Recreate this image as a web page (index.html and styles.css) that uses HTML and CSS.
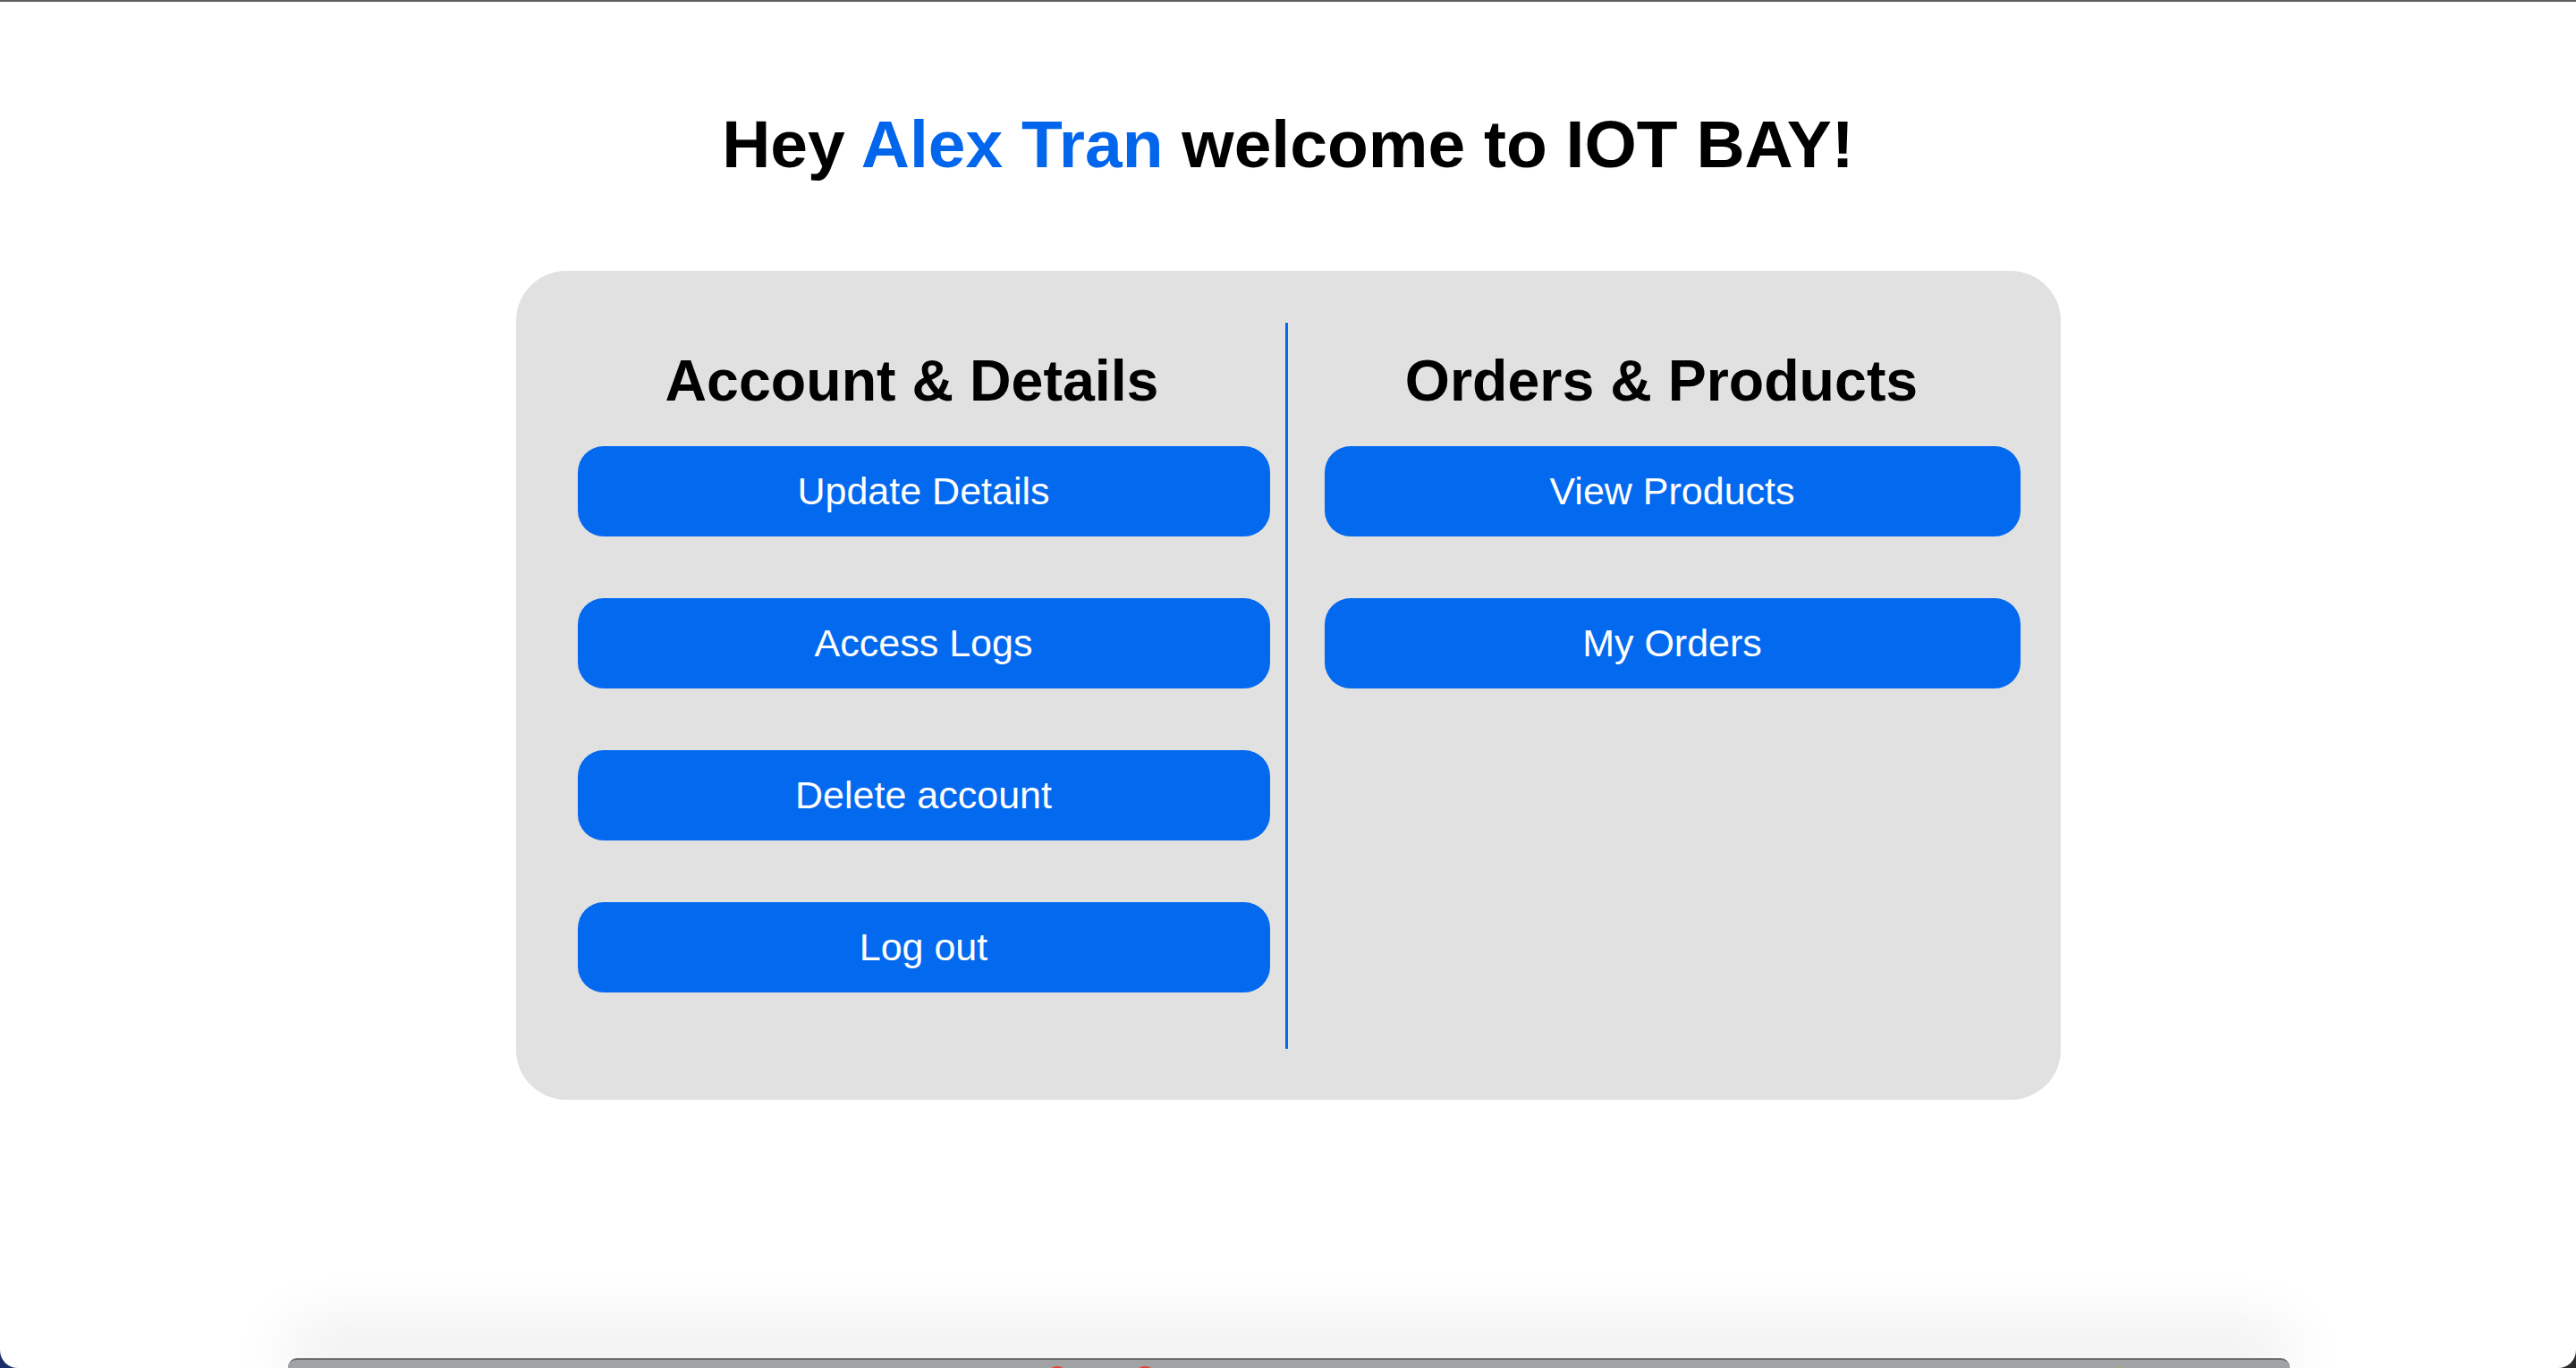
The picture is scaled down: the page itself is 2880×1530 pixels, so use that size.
FILE: index.html
```html
<!DOCTYPE html>
<html lang="en">
<head>
<meta charset="utf-8">
<title>IOT BAY - Dashboard</title>
<link rel="stylesheet" href="styles.css">
</head>
<body>
<div class="window">
  <h1 class="title">Hey <span class="name">Alex Tran</span> welcome to IOT BAY!</h1>
  <section class="panel">
    <div class="col col-left">
      <h2 class="col-title">Account &amp; Details</h2>
      <a class="btn" href="#">Update Details</a>
      <a class="btn" href="#">Access Logs</a>
      <a class="btn" href="#">Delete account</a>
      <a class="btn" href="#">Log out</a>
    </div>
    <div class="col col-right">
      <h2 class="col-title">Orders &amp; Products</h2>
      <a class="btn" href="#">View Products</a>
      <a class="btn" href="#">My Orders</a>
    </div>
  </section>
</div>
<div class="dock">
  <span class="dock-icon red one"></span>
  <span class="dock-icon red two"></span>
  <span class="dock-icon orange"></span>
  <span class="dock-icon green"></span>
</div>
</body>
</html>
```
FILE: styles.css
```css
html {
  background: linear-gradient(to right, #1a2e6c 0%, #1f2f5e 40%, #2b2b2d 100%);
}
body {
  margin: 0;
  height: 1530px;
  overflow: hidden;
  font-family: "Liberation Sans", Arial, sans-serif;
}
.window {
  height: 1530px;
  box-sizing: border-box;
  background: #ffffff;
  border-top: 2px solid #5e5d62;
  border-radius: 0 0 20px 20px;
  padding-top: 122px;
}
.title {
  margin: 0 0 104px;
  font-size: 75px;
  line-height: 1;
  font-weight: 700;
  text-align: center;
  color: #000;
}
.name {
  color: #0266ed;
}
.panel {
  width: 1727px;
  height: 927px;
  box-sizing: border-box;
  margin: 0 auto;
  padding: 58px 0 57px;
  background: #e1e1e1;
  border-radius: 56px;
  display: flex;
}
.col {
  display: flex;
  flex-direction: column;
  gap: 69px;
}
.col-left {
  width: 860px;
  box-sizing: border-box;
  padding: 0 17px 0 69px;
}
.col-right {
  flex: 1;
  border-left: 3px solid #0369ee;
  padding: 0 45px 0 41px;
}
.col-title {
  margin: 33px 0 -29px;
  font-size: 64.5px;
  line-height: 1;
  font-weight: 700;
  text-align: center;
  color: #000;
}
.col-left .col-title {
  padding-right: 26px;
}
.col-right .col-title {
  padding-right: 24px;
}
.btn {
  height: 101px;
  display: flex;
  align-items: center;
  justify-content: center;
  background: #0369ee;
  color: #fff;
  border-radius: 29px;
  font-size: 43px;
  text-decoration: none;
}
.dock {
  position: fixed;
  left: 322px;
  width: 2238px;
  top: 1519px;
  height: 40px;
  background: #a1a2a4;
  border-top: 2px solid #6c6c6c;
  border-radius: 10px 10px 0 0;
  box-shadow: 0 -30px 70px rgba(0, 0, 0, 0.10);
}
.dock-icon {
  position: absolute;
  display: block;
}
.dock-icon.red {
  top: 7px;
  width: 22px;
  height: 22px;
  border-radius: 50%;
  background: #e8403a;
}
.dock-icon.one { left: 849px; }
.dock-icon.two { left: 947px; }
.dock-icon.orange {
  top: 9px;
  left: 1176px;
  width: 90px;
  height: 20px;
  background: #e3855a;
}
.dock-icon.green {
  top: 8px;
  left: 2045px;
  width: 8px;
  height: 12px;
  border-radius: 50%;
  background: #8cc43d;
}
```
